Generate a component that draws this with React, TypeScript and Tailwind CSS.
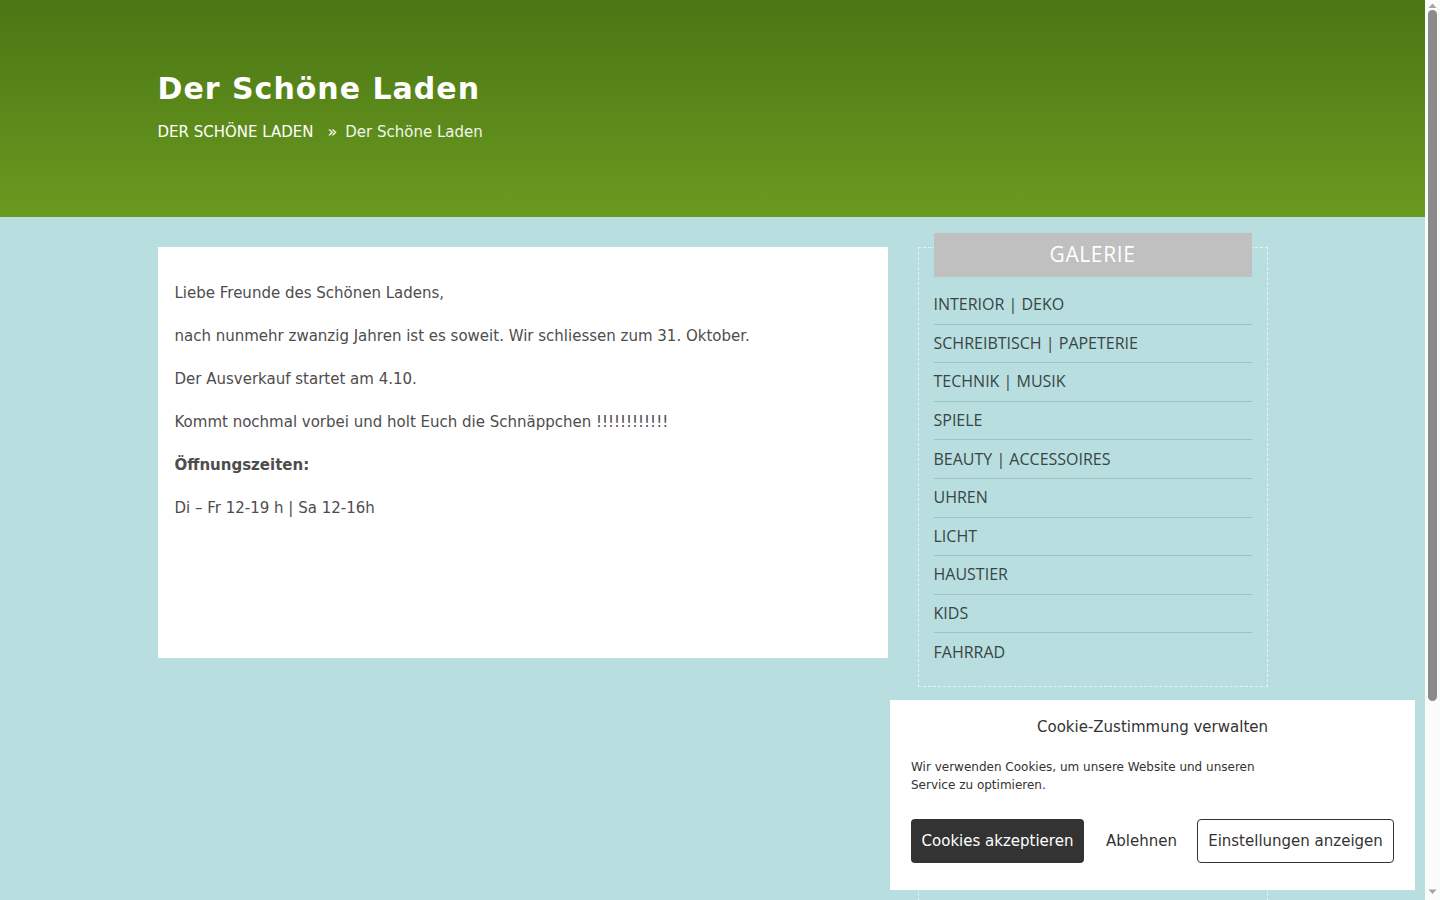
import React from "react";

const cats = [
  "INTERIOR | DEKO",
  "SCHREIBTISCH | PAPETERIE",
  "TECHNIK | MUSIK",
  "SPIELE",
  "BEAUTY | ACCESSOIRES",
  "UHREN",
  "LICHT",
  "HAUSTIER",
  "KIDS",
  "FAHRRAD",
];

function Scrollbar() {
  return (
    <div className="flex h-[900px] w-[15px] shrink-0 flex-col items-center bg-[#fbfbfb]">
      <svg width="15" height="10" viewBox="0 0 15 10" className="shrink-0">
        <polygon points="3.5,8 7.5,3.5 11.5,8" fill="#a3a3a3" />
      </svg>
      <div className="h-[691px] w-[9px] rounded-[5px] bg-[#8b8b8b]" />
      <div className="flex-1" />
      <svg width="15" height="14" viewBox="0 0 15 14" className="shrink-0">
        <polygon points="3.5,3.5 11.5,3.5 7.5,8" fill="#a3a3a3" />
      </svg>
    </div>
  );
}

export default function App() {
  return (
    <div className="flex h-[900px] overflow-hidden" style={{ fontFamily: '"DejaVu Sans", sans-serif' }}>
      <div className="relative h-[900px] flex-1 overflow-hidden bg-[#b9dedf]">
        <header className="h-[217px] bg-gradient-to-b from-[#4a7614] to-[#6b9a20]">
          <div className="mx-auto w-[1110px] pt-[71px]">
            <h1 className="text-[30px] font-bold leading-[36px] tracking-[1px] text-white">
              Der Schöne Laden
            </h1>
            <div className="mt-[14px] flex items-center text-[15px] leading-[22px] text-white">
              <span>DER SCHÖNE LADEN</span>
              <span className="ml-[14px] mr-[8px] text-[16px]">»</span>
              <span className="text-[#f0f6e8]">Der Schöne Laden</span>
            </div>
          </div>
        </header>

        <div className="mx-auto flex w-[1110px] gap-[30px] pt-[30px]">
          <main className="h-[411px] w-[730px] bg-white px-[17px] pt-[35px] text-[15px] leading-[22px] text-[#4d4d4d]">
            <p className="mb-[21px]">Liebe Freunde des Schönen Ladens,</p>
            <p className="mb-[21px]">
              nach nunmehr zwanzig Jahren ist es soweit. Wir schliessen zum 31. Oktober.
            </p>
            <p className="mb-[21px]">Der Ausverkauf startet am 4.10.</p>
            <p className="mb-[21px]">
              Kommt nochmal vorbei und holt Euch die Schnäppchen !!!!!!!!!!!!
            </p>
            <p className="mb-[21px] font-bold">Öffnungszeiten:</p>
            <p>Di – Fr 12-19 h | Sa 12-16h</p>
          </main>

          <aside className="flex w-[350px] flex-col gap-[30px]">
            <div
              className="h-[440px] border border-dashed border-[#e4f2f2] px-[15px]"
              style={{ fontFamily: '"Open Sans", sans-serif' }}
            >
              <div className="-mt-[15px] flex h-[44px] items-center justify-center bg-[#c0c0c0] text-[21px] tracking-[0.6px] text-white">
                GALERIE
              </div>
              <ul className="pt-[9px]">
                {cats.map((c, i) => (
                  <li
                    key={c}
                    className={
                      "flex h-[38.6px] items-center pb-[1px] text-[16px] text-[#384545] " +
                      (i < cats.length - 1 ? "border-b border-[#9fc2c2]" : "")
                    }
                  >
                    {c}
                  </li>
                ))}
              </ul>
            </div>
            <div className="h-[300px] border border-dashed border-[#e4f2f2]" />
          </aside>
        </div>

        <div className="absolute bottom-[10px] right-[10px] flex h-[190px] w-[525px] flex-col bg-white px-[21px] pt-[16px] text-[#333]">
          <div className="text-center text-[15px] leading-[22px]">Cookie-Zustimmung verwalten</div>
          <p className="mt-[20px] w-[370px] text-[12px] leading-[18px] text-[#333]">
            Wir verwenden Cookies, um unsere Website und unseren Service zu optimieren.
          </p>
          <div className="mt-[25px] flex items-center text-[15px]">
            <button className="h-[44px] w-[173px] rounded-[4px] bg-[#333] text-white">
              Cookies akzeptieren
            </button>
            <button className="ml-[21px] h-[44px] px-[1px] text-[#333]">Ablehnen</button>
            <button className="ml-auto h-[44px] w-[197px] rounded-[4px] border border-[#333] bg-white text-[#333]">
              Einstellungen anzeigen
            </button>
          </div>
        </div>
      </div>
      <Scrollbar />
    </div>
  );
}
